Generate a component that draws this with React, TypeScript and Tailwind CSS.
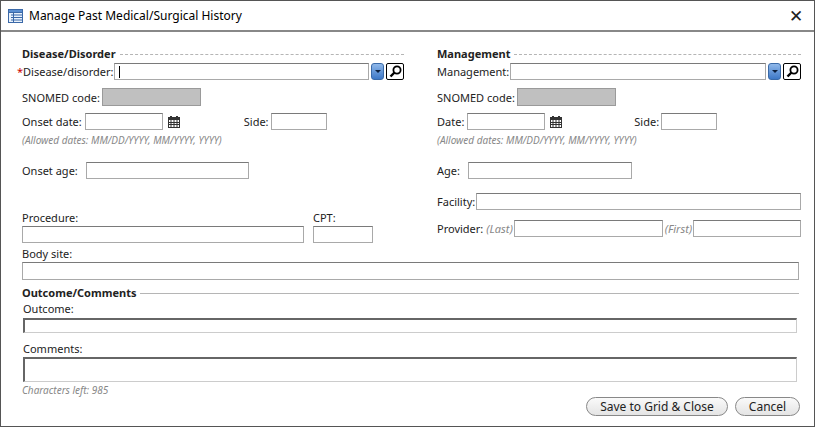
import React from 'react'

const inp = "h-[17px] border border-[#a9a9a9] border-t-[#7a7a7a] bg-white"

function Cal() {
  return (
    <svg width="12" height="12" viewBox="0 0 12 12" className="shrink-0">
      <rect x="0.5" y="1.5" width="11" height="10" fill="#fff" stroke="#333" />
      <rect x="0" y="1" width="12" height="3" fill="#333" />
      <rect x="2" y="0" width="2" height="2" fill="#333" />
      <rect x="8" y="0" width="2" height="2" fill="#333" />
      <path d="M0 6.5h12M0 8.5h12M3 4v8M6 4v8M9 4v8" stroke="#333" strokeWidth="1" />
    </svg>
  )
}

function Lookup() {
  return (
    <div className="flex items-center gap-[2px] ml-[2px]">
      <div className="w-[13px] h-[17px] rounded-[3px] bg-gradient-to-b from-[#8fb8ea] to-[#3d78c6] border border-[#3a6aa8] flex items-center justify-center">
        <div className="w-0 h-0 border-l-[3px] border-r-[3px] border-t-[3px] border-l-transparent border-r-transparent border-t-[#0b1f3d]" />
      </div>
      <div className="w-[18px] h-[17px] border border-black rounded-[2px] bg-white flex items-center justify-center">
        <svg width="13" height="13" viewBox="0 0 13 13">
          <circle cx="8" cy="5" r="3.6" fill="none" stroke="#000" strokeWidth="1.8" />
          <path d="M5.5 7.5L1.5 11.5" stroke="#000" strokeWidth="2.4" />
        </svg>
      </div>
    </div>
  )
}

function Header({ text, dashed }: { text: string; dashed?: boolean }) {
  return (
    <div className="flex items-center h-[14px] gap-1">
      <span className="font-bold text-[#222]">{text}</span>
      <div className={`flex-1 border-t border-[#b5b5b5] mt-[2px] ${dashed ? 'border-dashed' : ''}`} />
    </div>
  )
}

export default function App() {
  return (
    <div className="w-[815px] h-[427px] overflow-hidden bg-white border border-[#555] text-[11px] leading-[13px] text-[#222] flex flex-col" style={{ fontFamily: '"Noto Sans", "Open Sans", sans-serif' }}>
      <div className="h-[31px] shrink-0 border-b-2 border-[#888] flex items-center px-[7px] gap-[6px]">
        <svg width="15" height="14" viewBox="0 0 15 14">
          <rect x="0.5" y="0.5" width="14" height="13" fill="#e9f2fc" stroke="#3b69a8" />
          <rect x="0.5" y="0.5" width="14" height="3" fill="#5b8fd1" stroke="#3b69a8" />
          <path d="M5.5 3.5v10M3 6h11M3 8.5h11M3 11h11" stroke="#3b69a8" />
        </svg>
        <span className="text-[12px] text-black">Manage Past Medical/Surgical History</span>
        <div className="flex-1" />
        <span className="text-[17px] leading-none mr-[4px] font-light">✕</span>
      </div>

      <div className="flex flex-col pl-[21px] pr-[15px] pt-[14px]">
        <div className="grid grid-cols-[382px_364px] gap-x-[33px]">
          {/* left column */}
          <div className="flex flex-col">
            <Header text="Disease/Disorder" dashed />
            <div className="flex items-center mt-[3px] -ml-[5px]">
              <span><span className="text-[#c00]">*</span>Disease/disorder:</span>
              <div className={`${inp} flex-1 ml-[1px] flex items-center pl-[4px]`}><div className="w-px h-[12px] bg-black" /></div>
              <Lookup />
            </div>
            <div className="flex items-center mt-[8px] gap-[2px]">
              <span>SNOMED code:</span>
              <div className="w-[99px] h-[18px] bg-[#c0c0c0] border border-[#9a9a9a]" />
            </div>
            <div className="flex items-center mt-[7px]">
              <span>Onset date:</span>
              <div className={`${inp} w-[78px] ml-[3px]`} />
              <div className="ml-[5px]"><Cal /></div>
              <span className="ml-[64px]">Side:</span>
              <div className={`${inp} w-[56px] ml-[2px]`} />
            </div>
            <div className="mt-[4px] italic text-[#888] text-[10px]">(Allowed dates: MM/DD/YYYY, MM/YYYY, YYYY)</div>
            <div className="flex items-center mt-[15px]">
              <span>Onset age:</span>
              <div className={`${inp} w-[163px] ml-[8px] border-[#777]`} />
            </div>
            <div className="flex mt-[32px]">
              <div className="flex flex-col w-[282px]">
                <span>Procedure:</span>
                <div className={`${inp} mt-[2px] h-[17px] border-[#777]`} />
              </div>
              <div className="flex flex-col w-[60px] ml-[9px]">
                <span>CPT:</span>
                <div className={`${inp} mt-[2px] border-[#777]`} />
              </div>
            </div>
          </div>

          {/* right column */}
          <div className="flex flex-col">
            <Header text="Management" dashed />
            <div className="flex items-center mt-[3px]">
              <span>Management:</span>
              <div className={`${inp} flex-1 ml-[1px]`} />
              <Lookup />
            </div>
            <div className="flex items-center mt-[8px] gap-[2px]">
              <span>SNOMED code:</span>
              <div className="w-[99px] h-[18px] bg-[#c0c0c0] border border-[#9a9a9a]" />
            </div>
            <div className="flex items-center mt-[7px]">
              <span>Date:</span>
              <div className={`${inp} w-[78px] ml-[3px]`} />
              <div className="ml-[5px]"><Cal /></div>
              <span className="ml-[72px]">Side:</span>
              <div className={`${inp} w-[56px] ml-[2px]`} />
            </div>
            <div className="mt-[4px] italic text-[#888] text-[10px]">(Allowed dates: MM/DD/YYYY, MM/YYYY, YYYY)</div>
            <div className="flex items-center mt-[15px]">
              <span>Age:</span>
              <div className={`${inp} w-[164px] ml-[8px] border-[#777]`} />
            </div>
            <div className="flex items-center mt-[14px]">
              <span>Facility:</span>
              <div className={`${inp} flex-1 ml-[1px]`} />
            </div>
            <div className="flex items-center mt-[10px]">
              <span>Provider:</span>
              <span className="italic text-[#888] ml-[3px]">(Last)</span>
              <div className={`${inp} w-[149px] ml-[1px]`} />
              <span className="italic text-[#888] ml-[2px]">(First)</span>
              <div className={`${inp} flex-1 ml-[1px]`} />
            </div>
          </div>
        </div>

        <span className="mt-[4px]">Body site:</span>
        <div className={`${inp} mt-[2px] h-[18px] border-[#777]`} />

        <div className="mt-[5px]"><Header text="Outcome/Comments" /></div>
        <span className="mt-[3px] ml-[1px]">Outcome:</span>
        <div className="mt-[3px] ml-[1px] mr-[2px] h-[15px] border border-[#ccc] border-t-2 border-l-2 border-t-[#666] border-l-[#666]" />
        <span className="mt-[9px] ml-[1px]">Comments:</span>
        <div className="mt-[2px] ml-[1px] mr-[2px] h-[25px] border border-[#ccc] border-t-2 border-l-2 border-t-[#666] border-l-[#666]" />
        <span className="mt-[2px] italic text-[#888] text-[10px]">Characters left: 985</span>
        <div className="flex justify-end gap-[7px] mt-[0px] -mr-[1px]">
          <button className="h-[19px] w-[142px] rounded-full border border-[#888] bg-gradient-to-b from-[#fafafa] to-[#e4e4e4] text-[12px] leading-none">Save to Grid &amp; Close</button>
          <button className="h-[19px] w-[65px] rounded-full border border-[#888] bg-gradient-to-b from-[#fafafa] to-[#e4e4e4] text-[12px] leading-none">Cancel</button>
        </div>
      </div>
    </div>
  )
}
